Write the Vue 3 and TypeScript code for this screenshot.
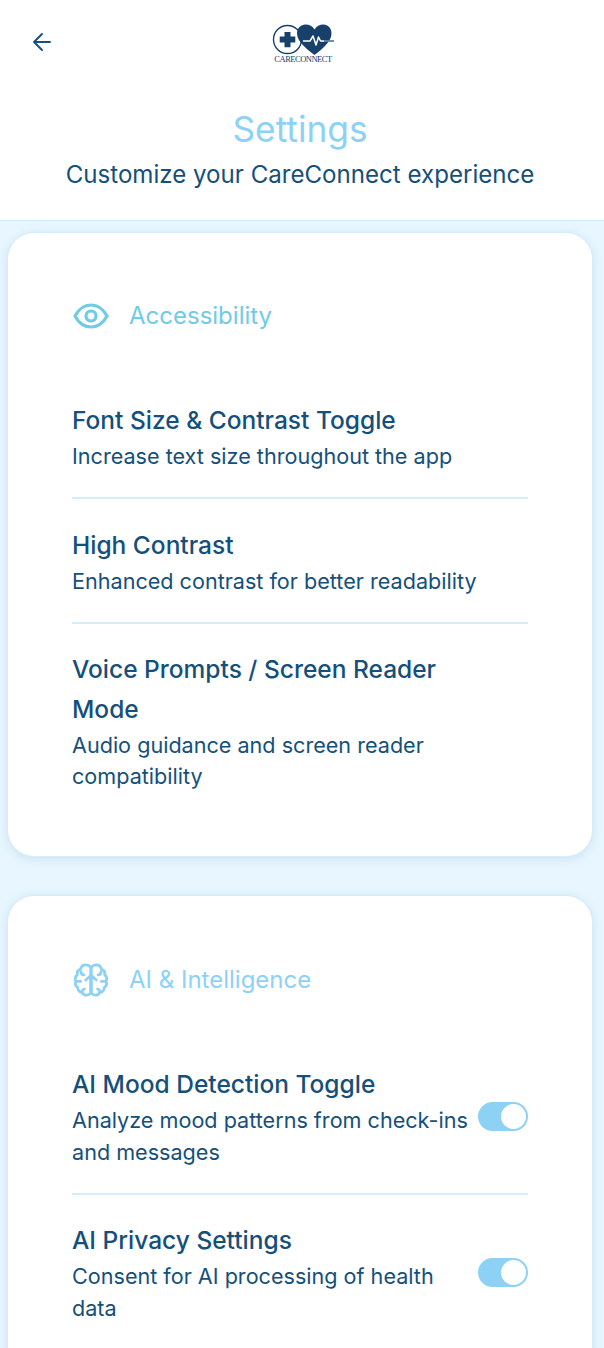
<script setup lang="ts">
interface Item { title: string; desc: string; toggle?: boolean }

const accessibility: Item[] = [
  { title: 'Font Size & Contrast Toggle', desc: 'Increase text size throughout the app' },
  { title: 'High Contrast', desc: 'Enhanced contrast for better readability' },
  { title: 'Voice Prompts / Screen Reader Mode', desc: 'Audio guidance and screen reader compatibility' },
]
const ai: Item[] = [
  { title: 'AI Mood Detection Toggle', desc: 'Analyze mood patterns from check-ins and messages', toggle: true },
  { title: 'AI Privacy Settings', desc: 'Consent for AI processing of health data', toggle: true },
]
</script>

<template>
  <div class="page">
    <header class="top">
      <div class="bar">
        <svg class="back" viewBox="0 0 20 20" width="20" height="20" fill="none" stroke="#14507a" stroke-width="1.9" stroke-linecap="round" stroke-linejoin="round">
          <path d="M18 10H2M10 2l-8 8 8 8" />
        </svg>
        <div class="logo">
          <svg viewBox="0 0 62 31" width="62" height="31" fill="none">
            <circle cx="15.500" cy="15.500" r="14" stroke="#17406b" stroke-width="1.4" />
            <path d="M12.500 8h6v4.600h4.800v6h-4.800v4.600h-6v-4.600H7.700v-6h4.800z" fill="#17406b" />
            <path d="M42.500 31C36 26 25 18 25 9.500 25 4 29 .5 33.500.5c4 0 7 1.800 9 5 2-3.200 5-5 9-5 4.500 0 8 3.500 8 9 0 8.500-10.500 16.500-17 21.500z" fill="#17406b" />
            <path d="M31 17h7l3-5 3 9 2.500-8 2 4h13" stroke="#fff" stroke-width="1.500" stroke-linejoin="round" />
            <path d="M52 17h10" stroke="#17406b" stroke-width="1.200" />
          </svg>
          <span class="logo-name">CARECONNECT</span>
        </div>
      </div>
      <div class="heading">
        <h1>Settings</h1>
        <p class="sub">Customize your CareConnect experience</p>
      </div>
    </header>

    <main class="content">
      <section class="card">
        <div class="section-head acc">
          <svg viewBox="0 0 36 26" width="36" height="26" fill="none" stroke="#6fcbe6" stroke-width="3.200">
            <path d="M2 13C6 5.500 11.500 2 18 2s12 3.500 16 11c-4 7.500-9.500 11-16 11S6 20.500 2 13z" />
            <circle cx="18" cy="13" r="5" />
          </svg>
          <h2>Accessibility</h2>
        </div>
        <div class="rows wide">
          <div v-for="item in accessibility" :key="item.title" class="row-wrap">
            <div class="row">
              <div class="text">
                <div class="title">{{ item.title }}</div>
                <div class="desc">{{ item.desc }}</div>
              </div>
            </div>
          </div>
        </div>
      </section>

      <section class="card">
        <div class="section-head brainy">
          <svg viewBox="0 0 36 36" width="34" height="34" fill="none" stroke="#8dd2f4" stroke-width="3" stroke-linecap="round" stroke-linejoin="round">
            <path d="M18 7C18 4 15.500 2 12.500 2 9.500 2 7.500 4 7 6.500 4 7.500 3 10 3.500 12.500 1.500 14 1 17 2 19.500c-1 2.500-.5 5 2 6.500 0 3 2 5 4.500 5 1 2 3 3 5 3 2.500 0 4.500-2 4.500-5z" />
            <path d="M18 7c0-3 2.500-5 5.500-5 3 0 5 2 5.500 4.500 3 1 4 3.500 3.500 6 2 1.500 2.500 4.500 1.500 7 1 2.500.5 5-2 6.500 0 3-2 5-4.500 5-1 2-3 3-5 3-2.500 0-4.500-2-4.500-5z" />
            <path d="M18 29V13M12.500 18l5.500-5 5.500 5M3 19.500h4M33 19.500h-4M7.500 9.500c0 2 1 3 3 3M28.500 9.500c0 2-1 3-3 3M8.500 31c0-2 1-3 2.500-3.500M27.500 31c0-2-1-3-2.500-3.500" />
          </svg>
          <h2>AI &amp; Intelligence</h2>
        </div>
        <div class="rows">
          <div v-for="item in ai" :key="item.title" class="row-wrap">
            <div class="row">
              <div class="text">
                <div class="title">{{ item.title }}</div>
                <div class="desc">{{ item.desc }}</div>
              </div>
              <span v-if="item.toggle" class="switch"><span class="knob" /></span>
            </div>
          </div>
        </div>
      </section>
    </main>
  </div>
</template>

<style>
html, body { margin: 0; height: 1348px; overflow: hidden; background: #e8f7ff; }
</style>

<style scoped>
.page {
  width: 604px; height: 1348px; overflow: hidden;
  font-family: Inter, "Liberation Sans", sans-serif; color: #14507a;
  background: #e8f7ff;
}
.top { background: #fff; height: 220px; border-bottom: 1px solid #cfeaf9; text-align: center; }
.bar { position: relative; height: 92px; display: flex; justify-content: center; padding-top: 24px; box-sizing: border-box; }
.back { position: absolute; left: 32px; top: 32px; }
.logo { display: flex; flex-direction: column; align-items: center; margin-left: 2px; }
.logo-name { font: 8.500px/9px "Liberation Serif", serif; color: #17406b; letter-spacing: -0.5px; }
.heading { padding-right: 4px; }
h1 { margin: 16px 0 0; font-size: 35.300px; line-height: 44px; font-weight: 400; color: #8dd2f4; }
.sub { margin: 6px 0 0; font-size: 24.100px; line-height: 34px; }
.content { padding: 12px 12px 0 8px; display: flex; flex-direction: column; gap: 40px; }
.card {
  width: 584px; box-sizing: border-box; background: #fff; border-radius: 26px;
  padding: 65px 64px 64px;
  box-shadow: 0 0 0 1px #d5edfa, 0 2px 12px rgba(60, 120, 165, 0.2);
}
.section-head { display: flex; align-items: center; gap: 20px; height: 36px; margin-left: 1px; }
.section-head h2 { margin: 0; font-size: 24px; line-height: 36px; font-weight: 400; }
.acc h2 { color: #6fcbe6; }
.brainy { margin-top: 1px; gap: 21px; }
.brainy svg { margin-left: 1px; }
.brainy h2 { color: #8dd2f4; }
.rows { margin-top: 66px; }
.row-wrap { padding-bottom: 25px; margin-bottom: 25px; border-bottom: 2px solid #d3edfb; }
.wide .row-wrap { margin-bottom: 25.500px; }
.row-wrap:last-child { border-bottom: 0; padding-bottom: 0; margin-bottom: 0; }
.row { display: flex; align-items: center; gap: 10px; }
.text { width: 396px; flex: none; }
.wide .text { width: 416px; }
.title { font-size: 24.500px; line-height: 40px; font-weight: 500; }
.wide .title { margin-bottom: 1px; }
.desc { font-size: 21.600px; line-height: 32px; }
.wide .desc { line-height: 31px; }
.switch { width: 50px; height: 29px; border-radius: 15px; background: #8dd2f4; position: relative; flex: none; }
.knob { position: absolute; right: 2px; top: 2px; width: 25px; height: 25px; border-radius: 50%; background: #fff; }
</style>
